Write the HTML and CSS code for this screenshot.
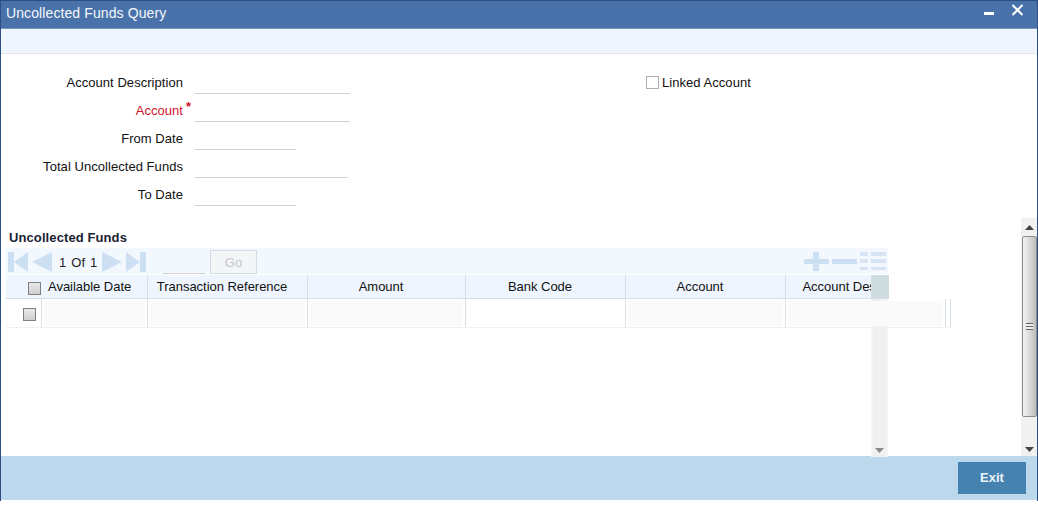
FILE: index.html
```html
<!DOCTYPE html>
<html lang="en">
<head>
<meta charset="utf-8">
<title>Uncollected Funds Query</title>
<link rel="stylesheet" href="styles.css">
</head>
<body>
<div class="window">
  <header class="titlebar">
    <h1 class="title">Uncollected Funds Query</h1>
    <div class="win-controls">
      <svg class="win-min" width="10" height="4" viewBox="0 0 10 4"><rect width="10" height="3" y="0" fill="#fff"/></svg>
      <svg class="win-close" width="13" height="12" viewBox="0 0 13 12"><path d="M1.500 1 L11.500 11 M11.500 1 L1.500 11" stroke="#fff" stroke-width="2" fill="none"/></svg>
    </div>
  </header>
  <div class="toolbar"></div>
  <main class="content">
    <section class="form">
      <div class="form-col">
        <div class="field"><label class="label">Account Description</label><span class="input w-155"></span></div>
        <div class="field"><label class="label required">Account</label><span class="star">*</span><span class="input w-155"></span></div>
        <div class="field"><label class="label">From Date</label><span class="input w-101"></span></div>
        <div class="field"><label class="label">Total Uncollected Funds</label><span class="input w-153"></span></div>
        <div class="field"><label class="label">To Date</label><span class="input w-101"></span></div>
      </div>
      <div class="linked"><span class="check plain"></span><span>Linked Account</span></div>
    </section>
    <section class="lower">
      <div class="grid-area">
        <h2 class="grid-title">Uncollected Funds</h2>
        <div class="pager">
          <div class="pager-left">
            <svg class="nav" width="20" height="20" viewBox="0 0 20 20"><path d="M0 0h6v20H0zM6 10 20 0v20z" fill="#cddff3"/></svg>
            <svg class="nav" width="20" height="20" viewBox="0 0 20 20"><path d="M0 10 20 0v20z" fill="#cddff3"/></svg>
            <span class="pages"><span>1</span><span>Of</span><span>1</span></span>
            <svg class="nav" width="20" height="20" viewBox="0 0 20 20"><path d="M20 10 0 0v20z" fill="#cddff3"/></svg>
            <svg class="nav" width="20" height="20" viewBox="0 0 20 20"><path d="M20 0h-6v20h6zM14 10 0 0v20z" fill="#cddff3"/></svg>
            <span class="page-input"></span>
            <button class="go" type="button">Go</button>
          </div>
          <div class="pager-right">
            <svg width="25" height="20" viewBox="0 0 25 20"><path d="M9 1h6v7h10v5H15v7H9v-7H0V8h9z" fill="#cddff3"/></svg>
            <svg width="25" height="20" viewBox="0 0 25 20"><rect y="8" width="25" height="5" fill="#cddff3"/></svg>
            <svg width="26" height="20" viewBox="0 0 26 20"><path d="M0 1h8v4H0zM11 1h15v4H11zM0 8h8v4H0zM11 8h15v4H11zM0 16h8v3H0zM11 16h15v3H11z" fill="#d6e4f4"/></svg>
          </div>
        </div>
        <div class="table">
          <div class="row head">
            <div class="cell c-check"><span class="check"></span></div>
            <div class="cell c-date">Available Date</div>
            <div class="cell c-ref">Transaction Reference</div>
            <div class="cell c-amt">Amount</div>
            <div class="cell c-bank">Bank Code</div>
            <div class="cell c-acct">Account</div>
            <div class="cell c-desc">Account Description</div>
            <div class="head-corner"></div>
          </div>
          <div class="row body">
            <div class="cell c-check"><span class="check"></span></div>
            <div class="cell c-date shade"></div>
            <div class="cell c-ref shade"></div>
            <div class="cell c-amt shade"></div>
            <div class="cell c-bank"></div>
            <div class="cell c-acct shade"></div>
            <div class="cell c-desc shade"></div>
            <div class="cell c-end"></div>
          </div>
          <div class="inner-scroll"><svg class="arrow" width="9" height="5" viewBox="0 0 9 5"><path d="M0 0h9L4.500 5z" fill="#8a8a8a"/></svg></div>
        </div>
      </div>
      <div class="scrollbar">
        <svg width="9" height="5" viewBox="0 0 9 5"><path d="M0 5h9L4.500 0z" fill="#444"/></svg>
        <div class="thumb"><span class="grip"></span></div>
        <svg class="arrow-down" width="9" height="5" viewBox="0 0 9 5"><path d="M0 0h9L4.500 5z" fill="#444"/></svg>
      </div>
    </section>
  </main>
  <footer class="footer"><button class="exit" type="button">Exit</button></footer>
</div>
</body>
</html>
```
FILE: styles.css
```css
* { box-sizing: border-box; }
html, body { margin: 0; padding: 0; background: #fff; }
body { width: 1038px; height: 508px; overflow: hidden; font-family: "Liberation Sans", Arial, sans-serif; font-size: 13px; letter-spacing: 0.05px; color: #111; }
.window { width: 1038px; height: 501px; border: 1px solid #2c4f86; border-bottom: 0; display: flex; flex-direction: column; }
.titlebar { height: 28px; background: #4a72aa; border-bottom: 1px solid #7c97b8; display: flex; justify-content: space-between; padding: 0 13px 0 5px; flex: none; }
.title { margin: 2px 0 0; font-size: 14px; letter-spacing: 0.1px; line-height: 20px; font-weight: 400; color: #f4f7fb; }
.win-controls { display: flex; align-items: flex-start; gap: 17px; }
.win-min { margin-top: 11px; }
.win-close { margin-top: 3px; }
.toolbar { height: 25px; background: #eef5fe; border-bottom: 1px solid #e3e5e8; flex: none; }
.content { flex: 1; display: flex; flex-direction: column; min-height: 0; }
.form { display: flex; height: 164px; flex: none; padding-top: 14px; }
.form-col { width: 645px; display: flex; flex-direction: column; }
.field { height: 28px; display: flex; align-items: flex-start; position: relative; }
.label { width: 182px; text-align: right; line-height: 30px; }
.required { color: #d3132b; }
.star { position: absolute; left: 185px; top: 3px; color: #d3132b; font-size: 13px; line-height: 16px; font-weight: 700; }
.input { display: block; height: 26px; margin: 0 0 0 12px; border-bottom: 1px solid #d2d2d2; }
.w-155 { width: 155px; }
.w-153 { width: 153px; }
.w-101 { width: 101px; }
.linked { display: flex; align-items: center; gap: 3px; height: 28px; }
.check { display: block; width: 13px; height: 13px; border: 1px solid #7f7f7f; background: linear-gradient(#e9e9e9, #cfcfcf); }
.check.plain { border-color: #b0b0b0; background: #fff; }
.lower { flex: 1; display: flex; min-height: 0; }
.grid-area { width: 1020px; padding-left: 5px; flex: none; position: relative; }
.grid-title { margin: 0; height: 30px; padding: 12px 0 0 3px; font-size: 13px; letter-spacing: 0.1px; line-height: 16px; font-weight: 700; color: #1a2233; }
.pager { width: 882px; height: 26px; background: #f3f8fe; display: flex; justify-content: space-between; }
.pager-left { display: flex; align-items: center; padding-left: 2px; padding-top: 2px; }
.nav { margin-right: 4px; }
.nav + .pages { margin-left: 3px; }
.pages { display: flex; gap: 5px; width: 43px; font-size: 13px; color: #222; }
.page-input { width: 42px; height: 24px; margin: 0 5px 0 13px; border-bottom: 1px solid #d2d2d2; }
.go { width: 47px; height: 24px; padding: 0; border: 1px solid #d4dbe2; background: #f3f5f7; color: #c3c7cc; font: 13px "Liberation Sans", Arial, sans-serif; }
.pager-right { display: flex; align-items: center; gap: 3px; padding-right: 2px; }
.table { position: relative; height: 182px; margin-top: 1px; overflow: visible; }
.row { display: flex; }
.head { width: 883px; height: 24px; background: #eef5fe; border-bottom: 1px solid #d5dfe8; overflow: hidden; position: relative; letter-spacing: -0.03px; }
.body { width: 945px; height: 29px; position: relative; z-index: 2; border-bottom: 1px solid #f7efe8; }
.cell { flex: none; height: 100%; border-right: 1px solid #d5dfe8; display: flex; align-items: center; justify-content: center; white-space: nowrap; }
.head .cell { padding: 0 11px 0 0; }
.head .c-check { justify-content: flex-end; padding: 3px 0 0; border-right: 0; width: 35px; margin-right: 1px; }
.head .c-date { width: 106px; justify-content: flex-start; padding-left: 6px; }
.body .c-check { justify-content: flex-start; padding: 2px 0 0 17px; width: 36px; }
.c-check { width: 36px; }
.c-date { width: 106px; }
.c-ref { width: 160px; }
.c-amt { width: 158px; }
.c-bank { width: 160px; }
.c-acct { width: 160px; }
.c-desc { width: 160px; }
.c-end { width: 5px; border-right: 1px solid #d5dfe8; }
.head-corner { position: absolute; right: 0; top: 0; width: 18px; height: 100%; background: #cfdde0; }
.shade { background: #fafafa; background-clip: content-box; padding: 2px 2px 1px 2px; }
.inner-scroll { position: absolute; left: 865px; top: 24px; width: 17px; height: 158px; background: linear-gradient(90deg, #f7f7f7, #efefef 15%, #f0f0f0 85%, #f7f7f7); display: flex; align-items: flex-end; justify-content: center; padding-bottom: 4px; }
.scrollbar { width: 16px; background: #f1f1f1; display: flex; flex-direction: column; align-items: center; padding-top: 7px; }
.thumb { width: 15px; height: 181px; margin-top: 6px; border: 1px solid #8d8d8d; border-radius: 2px; background: linear-gradient(90deg, #f2f2f2, #d4d4d4 60%, #bdbdbd); display: flex; align-items: center; justify-content: center; }
.grip { display: block; width: 7px; height: 7px; background: repeating-linear-gradient(#666 0 1px, #eee 1px 3px); }
.arrow-down { margin-top: auto; margin-bottom: 4px; }
.footer { height: 44px; flex: none; background: #bcd8ed; display: flex; align-items: center; justify-content: flex-end; padding: 0 11px 1px 0; margin-bottom: 1px; }
.exit { width: 68px; height: 32px; border: 0; padding: 0; background: #4682b0; color: #eaf5fb; font: 700 13px "Liberation Sans", Arial, sans-serif; }
```
